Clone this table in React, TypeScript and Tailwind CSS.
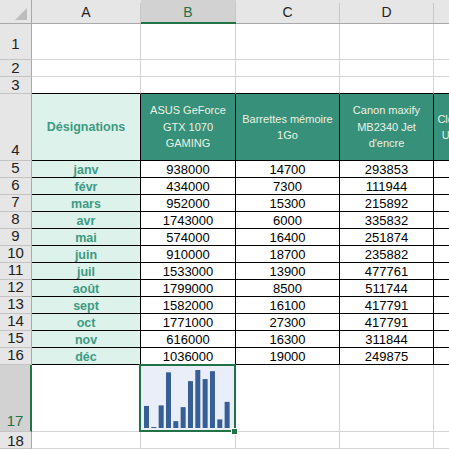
import type { ReactNode } from "react";

const GREEN = "#217346";

const rows = [
  { m: "janv", b: 938000, c: 14700, d: 293853 },
  { m: "févr", b: 434000, c: 7300, d: 111944 },
  { m: "mars", b: 952000, c: 15300, d: 215892 },
  { m: "avr", b: 1743000, c: 6000, d: 335832 },
  { m: "mai", b: 574000, c: 16400, d: 251874 },
  { m: "juin", b: 910000, c: 18700, d: 235882 },
  { m: "juil", b: 1533000, c: 13900, d: 477761 },
  { m: "août", b: 1799000, c: 8500, d: 511744 },
  { m: "sept", b: 1582000, c: 16100, d: 417791 },
  { m: "oct", b: 1771000, c: 27300, d: 417791 },
  { m: "nov", b: 616000, c: 16300, d: 311844 },
  { m: "déc", b: 1036000, c: 19000, d: 249875 },
];

// column widths incl. right border
const W = ["w-[109px]", "w-[95px]", "w-[104px]", "w-[94px]", "w-[94px]"];

function RowHead({ n, selected, pb = "pb-[2px]" }: { n: number; selected?: boolean; pb?: string }) {
  return (
    <div
      className={
        "flex w-[32px] shrink-0 items-end justify-center border-b border-b-[#c4c4c4] text-[15px] leading-[15px] " +
        pb +
        (selected
          ? " border-r-2 border-r-[#217346] bg-[#d2d2d2] text-[#217346]"
          : " border-r border-r-[#a8a8a8] bg-[#e6e6e6] text-[#222]")
      }
    >
      {n}
    </div>
  );
}

function Empty({ i, bottom = "border-b-[#d4d4d4]" }: { i: number; bottom?: string }) {
  return <div className={W[i] + " shrink-0 border-r border-b border-r-[#d4d4d4] " + bottom} />;
}

function Sparkline() {
  const vals = rows.map((r) => r.b);
  const min = Math.min(...vals);
  const max = Math.max(...vals);
  return (
    <svg width="94" height="66" className="block">
      {vals.map((v, i) => {
        const h = 1 + ((v - min) / (max - min)) * 57;
        return <rect key={i} x={3 + i * 7.33} y={63 - h} width="5" height={h} fill="#375f96" />;
      })}
    </svg>
  );
}

function HeadCell({ i, children }: { i: number; children: ReactNode }) {
  return (
    <div
      className={
        W[i] +
        " flex shrink-0 items-center justify-center overflow-hidden whitespace-nowrap border-r border-b border-black bg-[#36907a] text-center text-[11px] leading-[16.5px] text-[#ecf2e4]"
      }
    >
      <div>{children}</div>
    </div>
  );
}

export default function App() {
  return (
    <div
      className="relative h-[449px] w-[449px] overflow-hidden bg-white"
      style={{ fontFamily: '"Liberation Sans", Arial, sans-serif' }}
    >
      {/* column headers */}
      <div className="flex h-[24px] w-[600px]">
        <div className="flex w-[32px] shrink-0 items-start justify-start border-r border-b border-[#a8a8a8] bg-[#e6e6e6] pl-[15px] pt-[8px]">
          <svg width="12" height="12">
            <polygon points="12,0 12,12 0,12" fill="#bdbdbd" />
          </svg>
        </div>
        {["A", "B", "C", "D", "E"].map((l, i) => (
          <div
            key={l}
            className={
              W[i] +
              " flex shrink-0 " +
              (i === 1
                ? "border-b-2 border-b-[#217346] bg-[#d2d2d2] text-[#217346]"
                : "border-b border-b-[#a8a8a8] bg-[#e6e6e6] text-[#222]")
            }
          >
            <div className="flex flex-1 items-center justify-center pt-[2px] text-[14px]">{l}</div>
            <div className="h-[20px] w-px self-end bg-[#c8c8c8]" />
          </div>
        ))}
      </div>

      {/* rows 1-3 */}
      {[1, 2, 3].map((n) => (
        <div key={n} className={"flex w-[600px] " + (n === 1 ? "h-[36px]" : "h-[17px]")}>
          <RowHead n={n} pb={n === 1 ? "pb-[8px]" : "pb-[1px]"} />
          {[0, 1, 2, 3, 4].map((i) => (
            <Empty key={i} i={i} bottom={n === 3 ? "border-b-black" : "border-b-[#d4d4d4]"} />
          ))}
        </div>
      ))}

      {/* row 4 : headings */}
      <div className="flex h-[67px] w-[600px]">
        <RowHead n={4} pb="pb-[3px]" />
        <div className="flex w-[109px] shrink-0 items-center justify-center border-r border-b border-black bg-[#ddf2eb] text-[12.5px] font-bold text-[#3d9a83]">
          Désignations
        </div>
        <HeadCell i={1}>
          ASUS GeForce
          <br />
          GTX 1070
          <br />
          GAMING
        </HeadCell>
        <HeadCell i={2}>
          Barrettes mémoire
          <br />
          1Go
        </HeadCell>
        <HeadCell i={3}>
          Canon maxify
          <br />
          MB2340 Jet
          <br />
          d'encre
        </HeadCell>
        <HeadCell i={4}>
          Clé USB SanDisk
          <br />
          Ultra Flair 32Go
        </HeadCell>
      </div>

      {/* rows 5-16 */}
      {rows.map((r, k) => (
        <div key={r.m} className="flex h-[17px] w-[600px]">
          <RowHead n={k + 5} />
          <div className="flex w-[109px] shrink-0 justify-center border-r border-b border-black bg-[#ddf2eb] pt-[2px] text-[12.5px] font-bold leading-[14px] text-[#3d9a83]">
            {r.m}
          </div>
          {[r.b, r.c, r.d].map((v, i) => (
            <div
              key={i}
              className={
                W[i + 1] +
                " flex shrink-0 justify-center border-r border-b border-black pt-[2px] text-[13px] leading-[14px] text-black"
              }
            >
              {v}
            </div>
          ))}
          <div className={W[4] + " shrink-0 border-r border-b border-black"} />
        </div>
      ))}

      {/* row 17 : sparkline */}
      <div className="flex h-[67px] w-[600px]">
        <RowHead n={17} selected pb="pb-[3px]" />
        <Empty i={0} />
        <div className="w-[95px] shrink-0 border-r border-b border-[#d4d4d4] bg-[#e9eef8]">
          <Sparkline />
        </div>
        <Empty i={2} />
        <Empty i={3} />
        <Empty i={4} />
      </div>

      {/* row 18 */}
      <div className="flex h-[17px] w-[600px]">
        <RowHead n={18} pb="pb-[0px]" />
        {[0, 1, 2, 3, 4].map((i) => (
          <Empty key={i} i={i} />
        ))}
      </div>

      {/* active cell outline */}
      <div className="absolute left-[139px] top-[364px] h-[68px] w-[97px] border-2 border-[#217346]" />
      <div
        className="absolute left-[231px] top-[428px] h-[7px] w-[7px] border border-white"
        style={{ backgroundColor: GREEN }}
      />
    </div>
  );
}
